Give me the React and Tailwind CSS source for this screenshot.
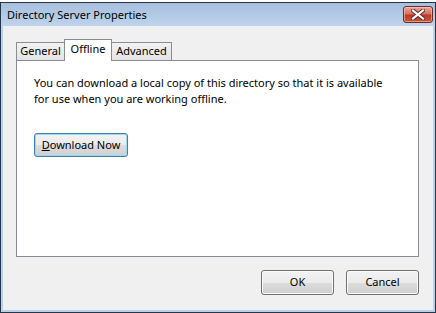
import React from 'react';

const font = "font-['Noto_Sans',sans-serif]";

const CloseGlyph = () => (
    <svg width="14" height="11" viewBox="0 0 14 11">
        <path d="M2 1.5 L12 9.5 M12 1.5 L2 9.5" stroke="#5a2a24" strokeWidth="4" strokeLinecap="square" />
        <path d="M2 1.5 L12 9.5 M12 1.5 L2 9.5" stroke="#ffffff" strokeWidth="2.2" strokeLinecap="square" />
    </svg>
);

const DialogButton = ({ children }) => (
    <button className="w-[73px] h-[25px] rounded-[3px] border border-[#707070] bg-[linear-gradient(#f2f2f2_0%,#ebebeb_50%,#dddddd_50%,#cfcfcf_100%)] text-[11px] text-black shadow-[inset_0_0_0_1px_#fcfcfc]">
        {children}
    </button>
);

const App = () => {
    return (
        <div className={`w-[436px] h-[313px] flex flex-col bg-white ${font}`}>
            <div className="h-[2px] bg-white"></div>
            <div className="flex-1 flex flex-col border border-[#26364a]">
                {/* title bar */}
                <div className="h-[23px] flex items-center justify-between pl-[6px] pr-[2px] bg-[linear-gradient(#a7bfdc,#bed4ed)]">
                    <span className="text-[11px] text-black leading-none">Directory Server Properties</span>
                    <div className="w-[30px] h-[17px] rounded-[3px] border border-[#6b2a22] bg-[linear-gradient(#e9a99b_0%,#d7705f_45%,#bf3a26_55%,#c9553f_100%)] flex items-center justify-center shadow-[inset_0_0_0_1px_rgba(255,220,210,0.5)]">
                        <CloseGlyph />
                    </div>
                </div>

                {/* body */}
                <div className="flex-1 flex flex-col border-x-2 border-b-2 border-[#b9d1ea] bg-[#f0f0f0] pt-[13px] pl-[13px] pr-[14px] pb-[15px]">
                    <div className="h-[21px] flex items-end">
                        <div className="h-[18px] w-[49px] flex items-center justify-center border border-b-0 border-[#898c95] bg-[linear-gradient(#f2f2f2,#e3e3e3)] text-[11px] text-black">
                            General
                        </div>
                        <div className="relative z-10 h-[22px] w-[48px] -mb-px -ml-px flex items-start justify-center pt-[1px] border border-b-0 border-[#898c95] bg-white text-[11px] text-black">
                            Offline
                        </div>
                        <div className="h-[18px] w-[61px] -ml-px flex items-center justify-center border border-b-0 border-[#898c95] bg-[linear-gradient(#f2f2f2,#e3e3e3)] text-[11px] text-black">
                            Advanced
                        </div>
                    </div>

                    <div className="h-[197px] border border-[#898c95] bg-white pt-[14px] px-[17px]">
                        <p className="text-[11px] leading-[16px] text-black whitespace-nowrap">
                            You can download a local copy of this directory so that it is available
                            <br />
                            for use when you are working offline.
                        </p>
                        <button className="mt-[26px] w-[94px] h-[24px] rounded-[3px] border border-[#3c7fb1] bg-[linear-gradient(#f2f2f2_0%,#ebebeb_50%,#dddddd_50%,#cfcfcf_100%)] text-[11px] text-black shadow-[inset_0_0_0_1px_#9fd6f0]">
                            <span className="underline">D</span>ownload Now
                        </button>
                    </div>

                    <div className="mt-[13px] flex justify-end gap-[12px]">
                        <DialogButton>OK</DialogButton>
                        <DialogButton>Cancel</DialogButton>
                    </div>
                </div>
            </div>
        </div>
    );
};

export default App;
